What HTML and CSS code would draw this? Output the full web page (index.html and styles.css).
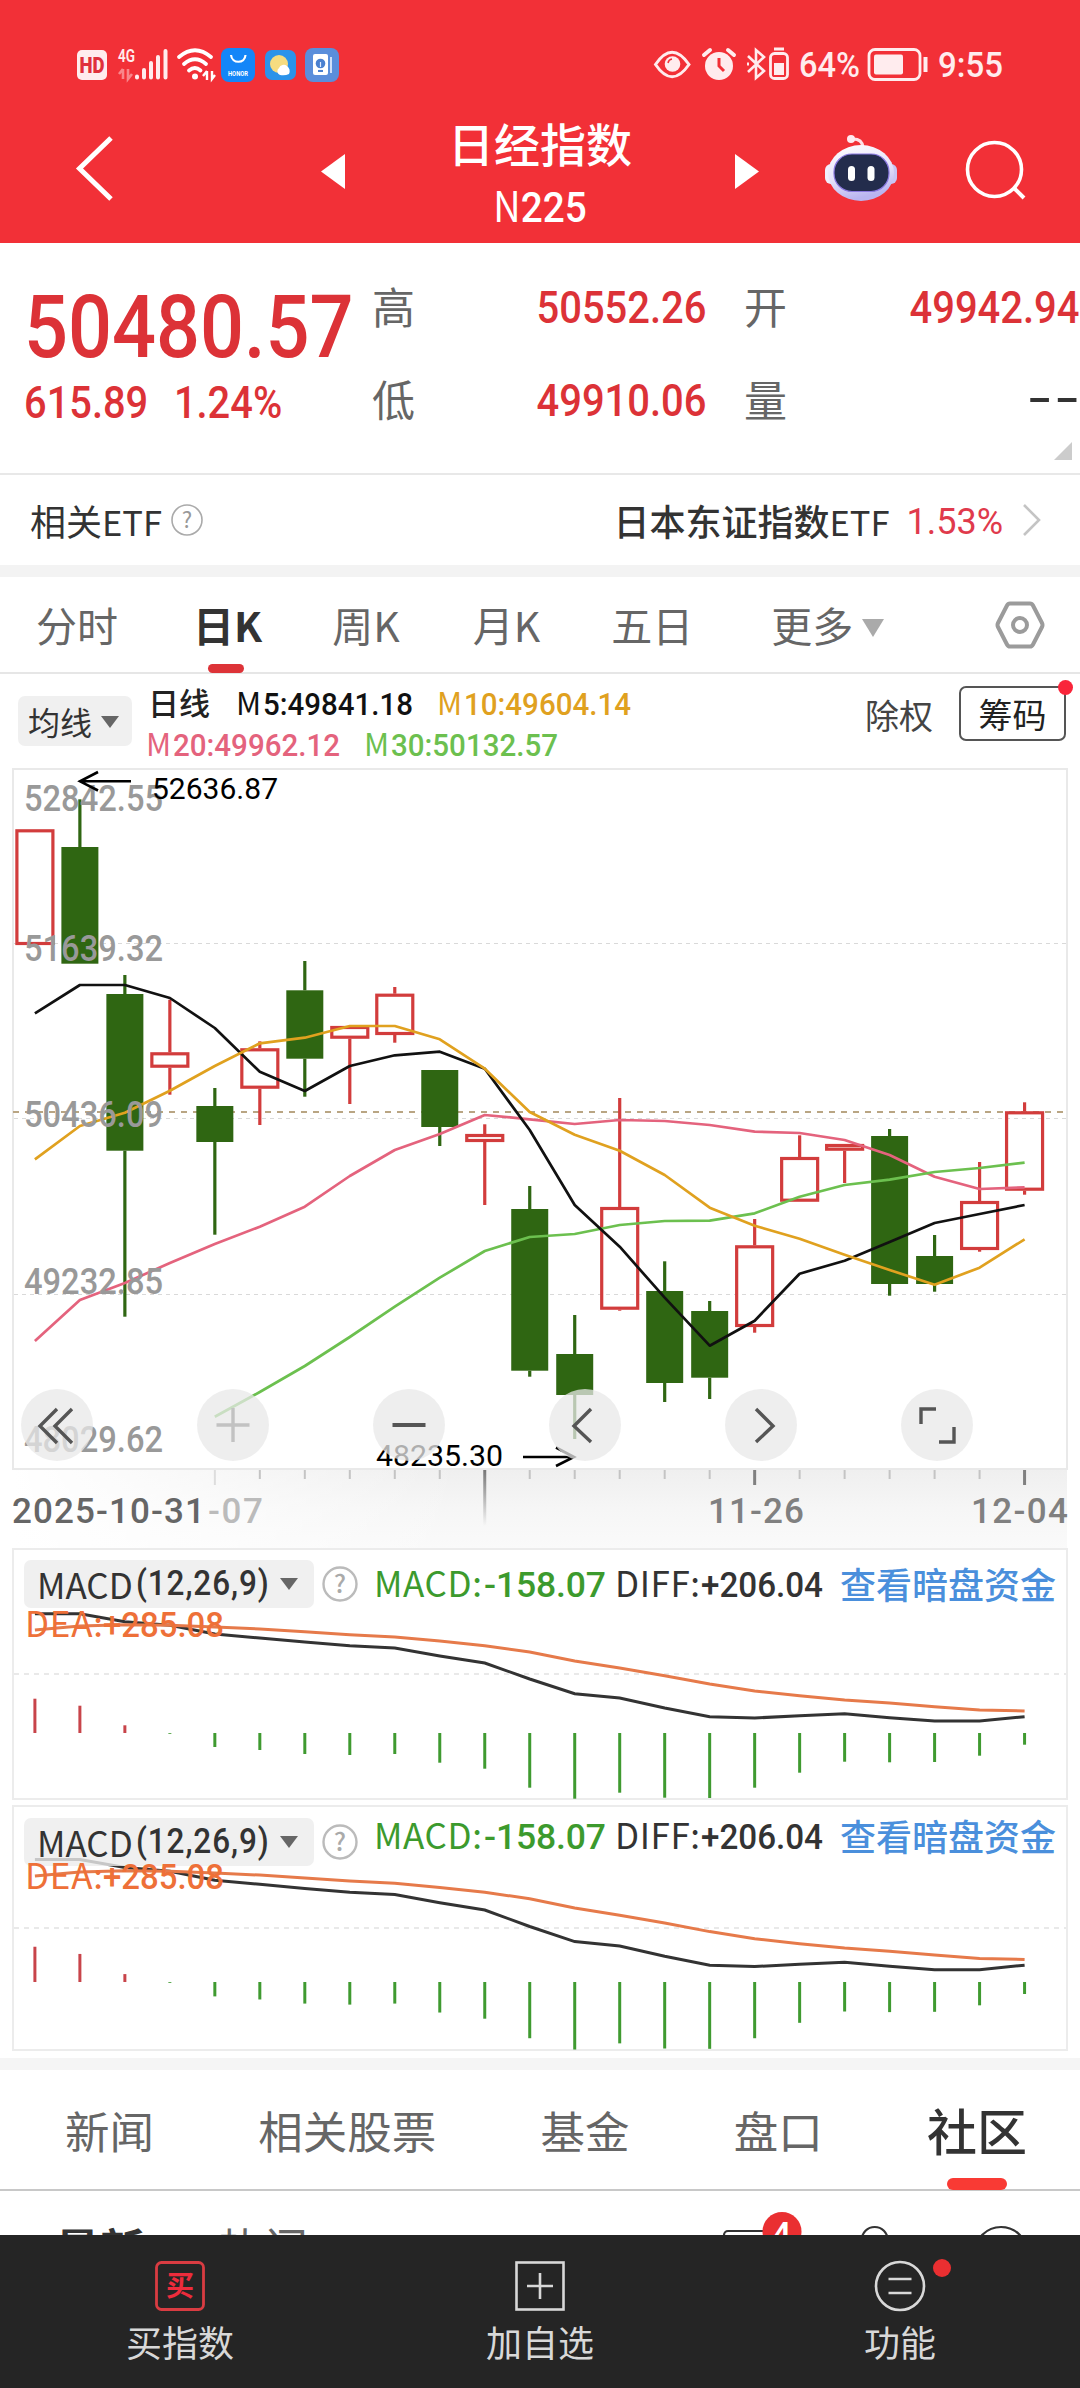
FILE: index.html
```html
<!DOCTYPE html>
<html lang="zh-CN">
<head>
<meta charset="utf-8">
<title>日经指数 N225</title>
<link rel="stylesheet" href="styles.css">
</head>
<body>
<div class="app">
  <header class="top">
    <div class="status">
      <svg class="st-left" width="264" height="46" viewBox="76 37 264 46">
        <rect x="77" y="50" width="30" height="30" rx="5" fill="#ffecee"/>
        <text x="92" y="73" class="hd" text-anchor="middle" textLength="25" lengthAdjust="spacingAndGlyphs">HD</text>
        <text x="118" y="62" class="g4" textLength="17" lengthAdjust="spacingAndGlyphs">4G</text>
        <path d="M123 69v10M123 69l-4 5M128 69v10l4-5" stroke="#f9868b" stroke-width="2.6" fill="none"/>
        <g stroke="#ffecee" stroke-width="4" stroke-linecap="round"><path d="M137 76.500v1M144 70v7.500M151 63v14.500M158 57v20.500M165.500 51v26.500"/></g>
        <g fill="none" stroke="#fff" stroke-width="3.800" stroke-linecap="round"><path d="M179 57q16-13.500 32 0M184 64q11-9.500 22 0M189 70.500q6-5 11.500 0"/></g>
        <circle cx="195" cy="76.500" r="3" fill="#fff"/>
        <path d="M207 71v9M207 71l-4 5M212 71v8l3-4" stroke="#fff" stroke-width="2.400" fill="none"/>
        <rect x="221" y="48" width="34" height="34" rx="8" fill="#1486f8"/>
        <path d="M231 55c1 9 14 9 14.500 0" fill="none" stroke="#fff" stroke-width="2.200"/>
        <text x="228" y="76" class="honor" textLength="20" lengthAdjust="spacingAndGlyphs">HONOR</text>
        <rect x="265" y="50" width="31" height="30" rx="7" fill="#2b93ea"/>
        <circle cx="279" cy="64" r="9" fill="#f6dc80"/><path d="M280 75a4 4 0 0 1-1-7 5 5 0 0 1 8-2q4 3 2 8-4 2-9 1z" fill="#fff"/>
        <rect x="305" y="48" width="34" height="34" rx="8" fill="#5a8edb"/>
        <rect x="313" y="54" width="15" height="21" rx="2" fill="#fff"/><circle cx="320.500" cy="63.500" r="4.800" fill="#4a80d0"/><path d="M320.500 62v5M318.500 70h4" stroke="#dfeaff" stroke-width="1.200"/><path d="M318 71h5" stroke="#4a80d0" stroke-width="2"/><path d="M331 57v16" stroke="#cfdff8" stroke-width="2"/>
      </svg>
      <svg class="st-right" width="354" height="46" viewBox="652 40 354 46">
        <path d="M655.500 64.500Q672 40 689 64.500 672 89 655.500 64.500z" fill="none" stroke="#ffecee" stroke-width="3"/>
        <circle cx="672.500" cy="64" r="7.800" fill="#ffecee"/><path d="M668 63a5 5 0 0 1 4-4" stroke="#f23037" stroke-width="1.500" fill="none"/>
        <circle cx="719" cy="66" r="14" fill="#ffecee"/><path d="M704 55l6-5M734 55l-6-5" stroke="#ffecee" stroke-width="4" stroke-linecap="round"/><path d="M719 58v8l5 5" stroke="#f23037" stroke-width="3" fill="none"/>
        <path d="M748 56l16 15-8 7V50l8 7-16 15" fill="none" stroke="#ffecee" stroke-width="2.600"/><path d="M747 64h2" stroke="#ffecee" stroke-width="3"/>
        <rect x="770.500" y="53.500" width="17" height="25" rx="4" fill="none" stroke="#ffecee" stroke-width="2.800"/><path d="M774 49h10" stroke="#ffecee" stroke-width="3"/><rect x="774" y="63" width="10" height="12" fill="#ffecee"/>
        <text x="799" y="77" class="st-txt" textLength="61" lengthAdjust="spacingAndGlyphs">64%</text>
        <rect x="869" y="49.500" width="51" height="30" rx="6" fill="none" stroke="#ffecee" stroke-width="2.800"/><rect x="874" y="54.500" width="29" height="20" rx="2" fill="#ffecee"/><path d="M925.500 57v15" stroke="#ffecee" stroke-width="4"/>
        <text x="938" y="77" class="st-txt" textLength="65" lengthAdjust="spacingAndGlyphs">9:55</text>
      </svg>
    </div>
    <nav class="nav">
      <svg width="40" height="68" viewBox="75 134 40 68"><path d="M111 138L79.500 168.500 111 199" fill="none" stroke="#fff" stroke-width="5"/></svg>
      <svg class="prev" width="24" height="35" viewBox="0 0 24 35"><path d="M24 0v35L0 17.500z" fill="#fff"/></svg>
      <div class="title"><h1>日经指数</h1><p><span class="lt">N</span>225</p></div>
      <svg class="next" width="24" height="35" viewBox="0 0 24 35"><path d="M0 0v35l24-17.500z" fill="#fff"/></svg>
      <svg class="robot" width="74" height="68" viewBox="824 134 74 68">
        <defs><linearGradient id="rb" x1="0" y1="0" x2=".3" y2="1"><stop offset="0" stop-color="#fff"/><stop offset=".6" stop-color="#e6e2fa"/><stop offset="1" stop-color="#b9b4f0"/></linearGradient></defs>
        <path d="M851 139q11-1 12 8" fill="none" stroke="#ffdfe6" stroke-width="3"/><circle cx="851" cy="139" r="4" fill="#ffeaf0"/>
        <rect x="825" y="164" width="12" height="20" rx="6" fill="#f1effc"/><rect x="885" y="164" width="12" height="20" rx="6" fill="#c9c6f4"/>
        <ellipse cx="861" cy="173" rx="33" ry="28" fill="url(#rb)"/>
        <rect x="834" y="154" width="55" height="37.500" rx="18" fill="#232c4c" stroke="#8a78e0" stroke-width="1.200"/>
        <rect x="848" y="166" width="7" height="15" rx="3.500" fill="#fff"/><rect x="867.500" y="166" width="7" height="15" rx="3.500" fill="#fff"/>
      </svg>
      <svg class="search" width="62" height="64" viewBox="964 138 62 64"><circle cx="994.500" cy="169.500" r="27" fill="none" stroke="#fff" stroke-width="3.600"/><path d="M1014 188l10 10" stroke="#fff" stroke-width="4"/></svg>
    </nav>
  </header>

  <section class="quote">
    <div class="price"><div class="last num">50480.57</div><div class="chg num"><span>615.89</span><span>1.24%</span></div></div>
    <dl class="stats">
      <dt>高</dt><dd class="num">50552.26</dd><dt>开</dt><dd class="num">49942.94</dd>
      <dt>低</dt><dd class="num">49910.06</dd><dt>量</dt><dd class="none"><i></i><i></i></dd>
    </dl>
    <i class="corner"></i>
  </section>

  <section class="etf">
    <span class="etf-label">相关<small>ETF</small></span>
    <svg class="q" width="32" height="32" viewBox="0 0 32 32"><circle cx="16" cy="16" r="15" fill="none" stroke="#aaa" stroke-width="1.600"/><text x="16" y="23.500" text-anchor="middle" class="qm">?</text></svg>
    <span class="etf-name"><b>日本东证指数</b><small>ETF</small></span><span class="etf-pct">1.53%</span>
    <svg width="20" height="34" viewBox="0 0 20 34"><path d="M2 2l15 15L2 32" fill="none" stroke="#c4c4c4" stroke-width="2.600"/></svg>
  </section>
  <div class="band"></div>

  <nav class="periods">
    <span>分时</span><span class="on">日K</span><span>周K</span><span>月K</span><span>五日</span><span>更多<i class="tri"></i></span>
    <svg width="50" height="48" viewBox="0 0 50 48"><path d="M15 2.500h20q2 0 3 2l9 17.500q1 2 0 4L38 43.500q-1 2-3 2H15q-2 0-3-2L3 26q-1-2 0-4L12 4.500q1-2 3-2z" fill="none" stroke="#9b9b9b" stroke-width="4"/><circle cx="25" cy="24" r="7" fill="none" stroke="#9b9b9b" stroke-width="4"/></svg>
  </nav>

  <section class="ma">
    <button class="chip">均线<i class="tri dark"></i></button>
    <svg class="legend" width="490" height="94" viewBox="145 674 490 94">
      <text x="148" y="715" class="cjk" fill="#222">日线</text>
      <text x="236" y="715" class="mk" fill="#111">M</text><text x="263" y="715" class="lg" fill="#111" textLength="150" lengthAdjust="spacingAndGlyphs">5:49841.18</text>
      <text x="437" y="715" class="mk" fill="#e0a11f">M</text><text x="464" y="715" class="lg" fill="#e0a11f" textLength="167" lengthAdjust="spacingAndGlyphs">10:49604.14</text>
      <text x="146" y="756" class="mk" fill="#e4637d">M</text><text x="173" y="756" class="lg" fill="#e4637d" textLength="167" lengthAdjust="spacingAndGlyphs">20:49962.12</text>
      <text x="364" y="756" class="mk" fill="#6cc04f">M</text><text x="391" y="756" class="lg" fill="#6cc04f" textLength="167" lengthAdjust="spacingAndGlyphs">30:50132.57</text>
    </svg>
    <span class="exr">除权</span>
    <button class="chips">筹码<i class="dot"></i></button>
  </section>

  <section class="kline">
    <svg width="1080" height="780" viewBox="0 768 1080 780">
      <defs>
        <linearGradient id="axv" x1="0" y1="0" x2="0" y2="1"><stop offset="0" stop-color="#efefef"/><stop offset=".5" stop-color="#f6f6f6"/><stop offset="1" stop-color="#fafafa"/></linearGradient>
        <linearGradient id="axh" x1="0" y1="0" x2="1" y2="0"><stop offset="0" stop-color="#fff"/><stop offset="1" stop-color="#fff" stop-opacity="0"/></linearGradient>
        <linearGradient id="tk" x1="0" y1="0" x2="0" y2="1"><stop offset="0" stop-color="#777"/><stop offset="1" stop-color="#777" stop-opacity="0"/></linearGradient>
      </defs>
      <rect x="13" y="1470" width="1054" height="78" fill="url(#axv)"/>
      <rect x="13" y="1470" width="450" height="78" fill="url(#axh)"/>
      <rect x="13" y="769" width="1054" height="700" fill="#fff" stroke="#e9e9e9" stroke-width="2"/>
      <path d="M14 943.500H1066M14 1118.500H1066M14 1294.500H1066" stroke="#d9d9d9" stroke-width="1" stroke-dasharray="4 4"/>
      <path d="M13 1112H1066" stroke="#b9a583" stroke-width="1.800" stroke-dasharray="6 6"/>
      <g id="candles"></g>
      <g id="averages" fill="none" stroke-width="2.700" stroke-linejoin="round"></g>
      <g class="scale">
        <text x="24" y="810.500" textLength="139" lengthAdjust="spacingAndGlyphs">52842.55</text>
        <text x="24" y="960.500" textLength="139" lengthAdjust="spacingAndGlyphs">51639.32</text>
        <text x="24" y="1126.500" textLength="139" lengthAdjust="spacingAndGlyphs">50436.09</text>
        <text x="24" y="1293.500" textLength="139" lengthAdjust="spacingAndGlyphs">49232.85</text>
        <text x="24" y="1451.500" textLength="139" lengthAdjust="spacingAndGlyphs">48029.62</text>
      </g>
      <g class="mark"><text x="152" y="799" textLength="126" lengthAdjust="spacingAndGlyphs">52636.87</text><text x="376" y="1466" textLength="127" lengthAdjust="spacingAndGlyphs">48235.30</text></g>
      <path d="M131 781.300H80M98 772L80 781.300 98 790.500M523 1457H574M556 1447.500L574 1457 556 1466" fill="none" stroke="#000" stroke-width="2.600"/>
      <g id="ticks"></g>
      <g class="dates">
        <text x="12" y="1522.500" fill="#666" textLength="193">2025-10-31</text>
        <text x="208" y="1522.500" fill="#bbb" textLength="55">-07</text>
        <text x="708" y="1522.500" fill="#808080" textLength="96">11-26</text>
        <text x="971" y="1522.500" fill="#808080" textLength="97">12-04</text>
      </g>
    </svg>
    <div class="tools">
      <button><svg viewBox="0 0 72 72"><path d="M36 20L19 37l17 17M51 20L34 37l17 17"/></svg></button>
      <button class="off"><svg viewBox="0 0 72 72"><path d="M36 19v34M19.500 36h33"/></svg></button>
      <button><svg viewBox="0 0 72 72"><path d="M19.500 36h33" stroke-width="4"/></svg></button>
      <button><svg viewBox="0 0 72 72"><path d="M42 20L25 37l17 16"/></svg></button>
      <button><svg viewBox="0 0 72 72"><path d="M31 20l17 17-17 16"/></svg></button>
      <button><svg viewBox="0 0 72 72"><path d="M35 20H20v15M53 38v15H38"/></svg></button>
    </div>
  </section>

  <section class="macd first">
    <svg class="plot" width="1080" height="254" viewBox="0 1547 1080 254"><g id="macd1"></g></svg>
    <button class="chip"><span class="ind">MACD</span><span class="num par">(12,26,9)</span><i class="tri dark"></i></button>
    <svg class="q big" width="36" height="36" viewBox="0 0 36 36"><circle cx="18" cy="18" r="16.500" fill="none" stroke="#bbb" stroke-width="2.400"/><text x="18" y="27" text-anchor="middle" class="qm">?</text></svg>
    <svg class="vals" width="450" height="46" viewBox="375 1560 450 46"><text x="374" y="1597" fill="#3c9a2d" class="lt2" textLength="108">MACD:</text><text x="484" y="1597" fill="#3c9a2d" class="lg3" textLength="122">-158.07</text><text x="615" y="1597" fill="#333" class="lt2" textLength="85">DIFF:</text><text x="701" y="1597" fill="#333" class="lg3" textLength="122" lengthAdjust="spacingAndGlyphs">+206.04</text></svg>
    <a>查看暗盘资金</a>
    <svg class="dea" width="202" height="48" viewBox="25 1600 202 48"><text x="25" y="1636.500" fill="#ee7038" class="lt2" textLength="78">DEA:</text><text x="103" y="1636.500" fill="#ee7038" class="lg3" textLength="121" lengthAdjust="spacingAndGlyphs">+285.08</text></svg>
  </section>
  <section class="macd second">
    <svg class="plot" width="1080" height="247" viewBox="0 1806 1080 247"><g id="macd2"></g></svg>
    <button class="chip"><span class="ind">MACD</span><span class="num par">(12,26,9)</span><i class="tri dark"></i></button>
    <svg class="q big" width="36" height="36" viewBox="0 0 36 36"><circle cx="18" cy="18" r="16.500" fill="none" stroke="#bbb" stroke-width="2.400"/><text x="18" y="27" text-anchor="middle" class="qm">?</text></svg>
    <svg class="vals" width="450" height="46" viewBox="375 1560 450 46"><text x="374" y="1597" fill="#3c9a2d" class="lt2" textLength="108">MACD:</text><text x="484" y="1597" fill="#3c9a2d" class="lg3" textLength="122">-158.07</text><text x="615" y="1597" fill="#333" class="lt2" textLength="85">DIFF:</text><text x="701" y="1597" fill="#333" class="lg3" textLength="122" lengthAdjust="spacingAndGlyphs">+206.04</text></svg>
    <a>查看暗盘资金</a>
    <svg class="dea" width="202" height="48" viewBox="25 1600 202 48"><text x="25" y="1636.500" fill="#ee7038" class="lt2" textLength="78">DEA:</text><text x="103" y="1636.500" fill="#ee7038" class="lg3" textLength="121" lengthAdjust="spacingAndGlyphs">+285.08</text></svg>
  </section>
  <div class="band low"></div>

  <nav class="sections"><span>新闻</span><span>相关股票</span><span>基金</span><span>盘口</span><span class="on">社区</span></nav>
  <section class="feed">
    <b>最新</b><span>热门</span>
    <svg width="330" height="44" viewBox="720 2191 330 44"><g fill="none" stroke="#333" stroke-width="2.200"><rect x="724" y="2231" width="54" height="44" rx="4"/><circle cx="874.700" cy="2240" r="13"/><circle cx="1001" cy="2253" r="26"/></g><circle cx="782" cy="2231.500" r="19.500" fill="#ea2f31"/><text x="782" y="2243" text-anchor="middle" class="badge">4</text></svg>
  </section>

  <footer class="bar">
    <div><svg width="52" height="52" viewBox="0 0 52 52"><rect x="2.500" y="2.500" width="47" height="47" rx="5" fill="none" stroke="#d93c42" stroke-width="2.800"/><text x="26" y="36" text-anchor="middle" class="buy">买</text></svg><span>买指数</span></div>
    <div><svg width="52" height="52" viewBox="0 0 52 52"><rect x="2.500" y="2.500" width="47" height="47" fill="none" stroke="#d8d8d8" stroke-width="2.600"/><path d="M26 13v26M13 26h26" stroke="#d8d8d8" stroke-width="2.600"/></svg><span>加自选</span></div>
    <div><svg width="52" height="52" viewBox="0 0 52 52"><circle cx="26" cy="26" r="24" fill="none" stroke="#d8d8d8" stroke-width="2.600"/><path d="M14.500 19h23M14.500 33h23" stroke="#d8d8d8" stroke-width="2.600"/></svg><i class="dot"></i><span>功能</span></div>
  </footer>
</div>
<script src="chart.js"></script>
</body>
</html>
```
FILE: chart.js
```js
// Column centres are evenly spaced across the plot.
const X = i => 34.9 + 44.985 * i;

// Each row: rising?, body top, body bottom, wick top, wick bottom.
const candles = [
  [1, 829.3, 945, 829.3, 945], [0, 847, 963.7, 799.3, 963.7], [0, 994, 1150.7, 975, 1316.7],
  [1, 1052.3, 1067.7, 999.7, 1094.7], [0, 1106, 1142, 1088, 1234.7], [1, 1048.3, 1088.7, 1041.3, 1125],
  [0, 990.3, 1058.7, 961, 1096.7], [1, 1026, 1038.7, 1026, 1104], [1, 993.7, 1035, 987, 1042.7],
  [0, 1070, 1127, 1070, 1146], [1, 1134, 1142, 1124.3, 1205], [0, 1209, 1370.7, 1186, 1376.7],
  [0, 1354, 1395, 1315, 1439], [1, 1207, 1309.7, 1098, 1310.7], [0, 1291, 1383, 1261.3, 1402],
  [0, 1311, 1377.7, 1301, 1399], [1, 1245.3, 1327, 1219, 1332.7], [1, 1157, 1201.7, 1135.3, 1201.7],
  [1, 1144, 1150.7, 1144, 1183], [0, 1136, 1284, 1129, 1295.7], [0, 1256, 1284, 1235, 1291.7],
  [1, 1201, 1250, 1162, 1251.7], [1, 1111.3, 1190.7, 1102.3, 1194.7]
];
const averages = [
  ['#e4637d', 0, [1341, 1300, 1283, 1263, 1244, 1226.7, 1206.7, 1176, 1150, 1134, 1115, 1119.3, 1124, 1120, 1121, 1125, 1131.7, 1133, 1140, 1155, 1176.7, 1189, 1187.3]],
  ['#6cc04f', 4, [1416.7, 1392, 1366, 1337, 1306.7, 1277.7, 1251, 1237, 1234, 1225, 1221, 1220.7, 1213.3, 1196.7, 1185, 1179.7, 1172, 1168, 1162.7]],
  ['#111', 0, [1013.3, 985, 985, 998, 1028, 1071.7, 1091, 1066, 1055.3, 1051.7, 1068.7, 1130, 1205, 1246.7, 1297.7, 1345.7, 1320.7, 1273.7, 1260.7, 1242, 1223, 1214, 1205]],
  ['#e0a11f', 0, [1159.3, 1126, 1112.7, 1090.7, 1066, 1043.3, 1037.7, 1026, 1026, 1039.3, 1068.7, 1112, 1134.7, 1150.7, 1175, 1207.7, 1225.7, 1238.7, 1254.7, 1270, 1284.7, 1267.7, 1239.3]]
];
const diff = [1613.7, 1613.7, 1621.7, 1625.3, 1634, 1638, 1642, 1645.7, 1648, 1656, 1663, 1679, 1693.7, 1698, 1708, 1716.7, 1718, 1715.7, 1713.7, 1717.7, 1721, 1721, 1716.7];
const dea = [1630, 1626, 1624.7, 1625.3, 1627, 1629, 1631.7, 1634.7, 1637, 1641, 1645.7, 1652, 1661, 1668, 1675.7, 1684, 1691, 1695.7, 1700, 1703, 1706.7, 1710, 1711];
const bars = [1698.7, 1705.7, 1725.3, 1733.8, 1747, 1750, 1754, 1755, 1754, 1762.7, 1768.7, 1787.7, 1798.7, 1792.7, 1797.7, 1798, 1787.7, 1772.7, 1761.7, 1762.3, 1762, 1755.7, 1744.7];

const put = (id, html) => { document.getElementById(id).innerHTML = html; };
const line = (pts, from, color) =>
  `<polyline fill="none" stroke="${color}" points="${pts.map((y, i) => X(i + from).toFixed(1) + ',' + y.toFixed(1)).join(' ')}"/>`;

put('candles', candles.map(([up, t, b, wt, wb], i) => {
  const x = X(i), c = up ? '#d23c3c' : '#2f6612';
  const wick = (a, z) => z > a ? `<path d="M${x} ${a}V${z}" stroke="${c}" stroke-width="3.2"/>` : '';
  const body = up
    ? `<rect x="${x - 18}" y="${t + 1.5}" width="36" height="${b - t - 3}" fill="none" stroke="${c}" stroke-width="3.2"/>`
    : `<rect x="${x - 18.5}" y="${t}" width="37" height="${b - t}" fill="${c}"/>`;
  return wick(wt, t) + wick(b, wb) + body;
}).join(''));

put('averages', averages.map(([c, from, pts]) => line(pts, from, c)).join(''));

put('ticks', candles.map((_, i) => {
  if (i < 4) return '';
  if (i === 10) return `<rect x="${X(i) - 1.5}" y="1470" width="3" height="56" fill="url(#tk)"/>`;
  const major = i === 16 || i === 22;
  return `<rect x="${X(i) - (major ? 1.5 : 1)}" y="1470" width="${major ? 3 : 2}" height="${major || i === 4 ? 15 : 9}" fill="${major ? '#808080' : i === 4 ? '#ddd' : '#c4c4c4'}"/>`;
}).join(''));

function macd(id, top, bottom, grid, base, k) {
  const Y = y => base + (y - 1733) * k;
  put(id,
    `<rect x="13" y="${top}" width="1054" height="${bottom - top}" fill="#fff" stroke="#ececec" stroke-width="2"/>` +
    `<path d="M14 ${grid}H1066" stroke="#e2e2e2" stroke-width="1.6" stroke-dasharray="5 5"/>` +
    `<g stroke-width="3">${line(diff.map(Y), 0, '#333')}${line(dea.map(Y), 0, '#e67a4a')}` +
    bars.map((y, i) => `<path d="M${X(i)} ${base}V${Y(y)}" stroke="${i < 3 ? '#c8444a' : '#3f9a30'}"/>`).join('') + '</g>');
}
macd('macd1', 1549, 1799, 1674, 1733, 1);
macd('macd2', 1807, 2051, 1929, 1983, 1.028);
```
FILE: styles.css
```css
* { box-sizing: border-box; }
body { margin: 0; background: #fff; font-family: "Noto Sans CJK SC", sans-serif; color: #333; }
.app { width: 1080px; height: 2388px; overflow: hidden; display: flex; flex-direction: column; }
.app > * { flex: none; }
svg { display: block; flex: none; }
button { border: 0; padding: 0; margin: 0; font: inherit; color: inherit; }
.num, .lg, .lg3, .scale, .dates { font-family: Roboto, sans-serif; font-weight: 500; }

.top { height: 243px; background: #f23037; color: #fff; }
.status { height: 83px; padding: 37px 74px 0 76px; display: flex; justify-content: space-between; }
.st-right { margin-top: 3px; }
.hd { font: 900 22px Roboto, sans-serif; fill: #e0303c; }
.g4 { font: 600 18px Roboto, sans-serif; fill: #ffecee; }
.honor { font: 700 7px Roboto, sans-serif; fill: #fff; }
.st-txt { font: 500 35px Roboto, sans-serif; fill: #ffecee; }
.nav { height: 160px; display: flex; align-items: flex-start; padding-left: 75px; }
.nav > svg { margin-top: 51px; }
.nav > .prev { margin: 71px 0 0 206px; }
.title { width: 390px; text-align: center; }
.title h1 { margin: 30px 0 0; font-size: 46px; line-height: 58px; font-weight: 500; }
.title p { margin: 6px 0 0; font: 500 43px/60px Roboto, sans-serif; transform: scaleX(.9); }
.title .lt { font-family: "Noto Sans CJK SC", sans-serif; font-weight: 400; font-size: 42px; line-height: 1; }
.nav > .next { margin-top: 71px; }
.nav > .robot { margin-left: 65px; }
.nav > .search { margin: 55px 0 0 66px; }

.quote { height: 232px; border-bottom: 2px solid #e8e8e8; position: relative; display: flex; color: #dc3237; }
.price { width: 372px; padding-left: 24px; white-space: nowrap; display: flex; flex-direction: column; align-items: flex-start; }
.last { font-size: 88px; line-height: 90px; margin-top: 39px; transform: scaleX(.88); transform-origin: left; }
.chg { display: flex; gap: 29px; font-size: 45px; line-height: 60px; margin-top: 1px; transform: scaleX(.885); transform-origin: left; }
.stats { margin: 17px 0 0; width: 708px; display: grid; grid-template: 93px 93px / 60px 275px 37px 60px 276px; align-items: center; }
.stats dt { font-size: 43px; line-height: 60px; color: #666; margin-top: -4px; }
.stats dt:nth-of-type(even) { grid-column: 4; }
.stats dd { margin: 3px 0 0; font-size: 45px; line-height: 60px; white-space: nowrap; justify-self: end; transform: scaleX(.888); transform-origin: right; }
.stats .none { display: flex; gap: 10px; padding-right: 4px; margin: 0; }
.none i { width: 21px; height: 4px; background: #333; }
.corner { position: absolute; right: 8px; bottom: 13px; width: 0; height: 0; border: 9px solid transparent; border-right-color: #ccc; border-bottom-color: #ccc; }

.etf { height: 90px; display: flex; align-items: center; padding: 0 38px 0 30px; font-size: 36px; color: #333; }
.etf small { font-size: 34.5px; }
.q { margin-left: 9px; }
.qm { font: 400 22px "Noto Sans CJK SC", sans-serif; fill: #999; }
.big .qm { font-size: 25px; fill: #aaa; font-weight: 500; }
.etf-name { margin-left: auto; }
.etf-name b { font-weight: 500; }
.etf-pct { font: 400 36px Roboto, sans-serif; color: #e03a4c; margin: 3px 19px 0 17px; }
.band { height: 12px; background: #f3f3f3; }

.periods { height: 97px; border-bottom: 2px solid #e6e6e6; display: flex; align-items: center; padding: 0 35px 0 36px; font-size: 41px; color: #666; }
.periods span { height: 95px; line-height: 94px; white-space: nowrap; }
.periods span:nth-child(2) { margin-left: 75px; }
.periods span:nth-child(3) { margin-left: 70px; }
.periods span:nth-child(4) { margin-left: 73px; }
.periods span:nth-child(5) { margin-left: 71px; }
.periods span:nth-child(6) { margin-left: 78px; }
.periods svg { margin-left: auto; }
.periods .on { color: #333; font-weight: 700; position: relative; }
.periods .on::after { content: ""; position: absolute; left: 15px; bottom: -1px; width: 36px; height: 9px; border-radius: 5px; background: #dd3338; }
.tri { display: inline-block; border: solid transparent; border-width: 18px 11px 0; border-top-color: #aaa; margin-left: 9px; vertical-align: 5px; }
.tri.dark { border-width: 12px 9px 0; border-top-color: #666; vertical-align: 7px; }

.ma { height: 94px; display: flex; align-items: flex-start; padding-left: 18px; }
.chip { background: rgba(236,236,236,.8); border-radius: 7px; }
.ma .chip { width: 114px; height: 50px; margin-top: 22px; font-size: 32px; line-height: 48px; padding-right: 3px; white-space: nowrap; }
.legend { margin-left: 13px; }
.cjk { font: 500 31px "Noto Sans CJK SC", sans-serif; }
.mk { font: 400 31px "Noto Sans CJK SC", sans-serif; }
.lg { font-size: 32px; }
.exr { margin-left: 230px; font-size: 34px; line-height: 50px; margin-top: 16px; color: #444; white-space: nowrap; }
.chips { position: relative; margin: 12px 0 0 26px; width: 107px; height: 55px; border: 2px solid #555; border-radius: 7px; background: #fff; font-size: 34px; line-height: 50px; color: #222; white-space: nowrap; }
.dot { position: absolute; width: 15px; height: 15px; border-radius: 50%; background: #f9253a; right: -9px; top: -8px; }

.kline { position: relative; height: 780px; }
.scale { font-size: 36.5px; fill: #999; }
.mark { font: 400 30px Roboto, sans-serif; }
.dates { font-size: 35px; }
.tools { position: absolute; left: 21px; top: 621px; display: flex; gap: 104px; }
.tools button { width: 72px; height: 72px; border-radius: 50%; background: rgba(232,232,232,.75); }
.tools svg { width: 72px; height: 72px; fill: none; stroke: #555; stroke-width: 3.4; }
.tools .off svg { stroke: #c2c2c2; }

.macd { position: relative; display: flex; align-items: flex-start; padding-left: 24px; }
.macd > * { position: relative; }
.macd .plot { position: absolute; left: 0; top: -1px; }
.first { height: 258px; }
.second { height: 252px; }
.macd .chip { width: 290px; height: 48px; margin-top: 12px; line-height: 46px; font-size: 35px; color: #333; display: flex; align-items: center; padding-left: 13px; white-space: nowrap; }
.par { letter-spacing: 1px; margin-left: 3px; width: 134px; transform: scaleX(.9); transform-origin: left; text-align: left; }
.macd .chip .tri { margin-left: 10px; }
.macd .q { margin: 18px 0 0 8px; }
.vals { margin: 12px 0 0 17px; }
.second .vals { margin-top: 6px; }
.lt2 { font: 400 35px "Noto Sans CJK SC", sans-serif; }
.lg3 { font-size: 35.5px; }
.macd a { margin: 10px 0 0 15px; font-size: 36px; line-height: 50px; color: #4a8fdc; font-weight: 500; white-space: nowrap; }
.second a { margin-top: 4px; }
.macd .dea { position: absolute; left: 25px; top: 52px; }
.second .dea { top: 46px; }
.band.low { background: #f5f5f5; }

.sections { height: 121px; border-bottom: 2px solid #c8c8c8; display: flex; justify-content: space-between; padding: 0 53px 0 65px; font-size: 44.5px; line-height: 119px; color: #666; }
.sections .on { font-size: 50px; line-height: 118px; font-weight: 500; color: #333; position: relative; }
.sections .on::after { content: ""; position: absolute; left: 20px; top: 108px; width: 60px; height: 12px; border-radius: 6px; background: #f93a34; }
.feed { height: 44px; overflow: hidden; display: flex; padding-left: 55px; font-size: 45px; line-height: 60px; color: #666; }
.feed b, .feed span { margin-top: 27px; width: 163px; }
.feed b { color: #333; }
.feed svg { margin-left: 339px; }
.badge { font: 700 30px Roboto, sans-serif; fill: #fff; }

.bar { flex: 1 0 auto !important; background: #252525; display: grid; grid-template-columns: repeat(3, 360px); color: #d8d8d8; font-size: 36px; line-height: 50px; }
.bar div { position: relative; display: flex; flex-direction: column; align-items: center; padding-top: 25px; }
.bar span { margin-top: 4px; }
.buy { font: 700 28px "Noto Sans CJK SC", sans-serif; fill: #ee2c3c; }
.bar .dot { width: 18px; height: 18px; right: 129px; top: 24px; background: #ea2f31; }
```
